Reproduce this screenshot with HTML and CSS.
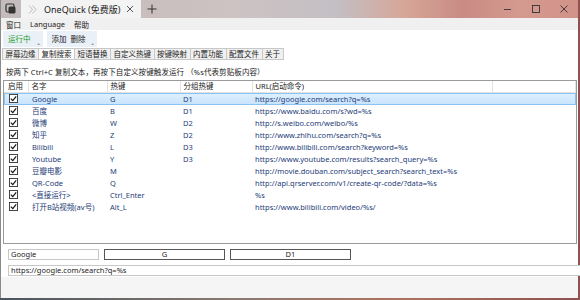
FILE: index.html
```html
<!DOCTYPE html>
<html lang="zh-CN">
<head>
    <meta charset="UTF-8">
    <title>OneQuick (免费版)</title>
    <link rel="stylesheet" href="styles.css">
</head>
<body>
    <div class="window">
        <!-- Barra de titulo -->
        <div class="titlebar">
            <div class="app-icon">
                <svg width="12" height="12" viewBox="0 0 12 12">
                    <rect x="1" y="1" width="8" height="8" rx="1.5" fill="none" stroke="#333" stroke-width="1.2"/>
                    <rect x="3.5" y="3.5" width="7" height="7" rx="1.5" fill="#333"/>
                </svg>
            </div>
            <div class="tab-title">
                <svg class="chev" width="10" height="9" viewBox="0 0 10 9">
                    <path d="M1 0.5 L4.5 4.5 L1 8.5 M4.5 0.5 L8 4.5 L4.5 8.5" fill="none" stroke="#bbb" stroke-width="1"/>
                </svg>
                <span class="title-text">OneQuick (免费版)</span>
                <svg class="tab-close" width="8" height="8" viewBox="0 0 8 8">
                    <path d="M1 1 L7 7 M7 1 L1 7" stroke="#444" stroke-width="0.9"/>
                </svg>
            </div>
            <div class="newtab">
                <svg width="10" height="10" viewBox="0 0 10 10">
                    <path d="M5 0.5 V9.5 M0.5 5 H9.5" stroke="#333" stroke-width="1"/>
                </svg>
            </div>
            <div class="spacer"></div>
            <div class="controls">
                <span class="ctl">
                    <svg width="10" height="10" viewBox="0 0 10 10"><path d="M1 5.5 H8" stroke="#333" stroke-width="0.9"/></svg>
                </span>
                <span class="ctl">
                    <svg width="10" height="10" viewBox="0 0 10 10"><rect x="1.5" y="1.5" width="7" height="7" fill="none" stroke="#333" stroke-width="0.9"/></svg>
                </span>
                <span class="ctl">
                    <svg width="10" height="10" viewBox="0 0 10 10"><path d="M1.5 1.5 L8.5 8.5 M8.5 1.5 L1.5 8.5" stroke="#333" stroke-width="0.9"/></svg>
                </span>
            </div>
        </div>

        <div class="menubar">
            <span>窗口</span>
            <span>Language</span>
            <span>帮助</span>
        </div>

        <div class="content">
            <div class="toolbar">
                <div class="tool-btn running">运行中<span class="drop">⌄</span></div>
                <div class="tool-btn">添加&nbsp;&nbsp;删除<span class="drop">⌄</span></div>
            </div>

            <div class="tabs">
                <span class="tab">屏幕边缘</span>
                <span class="tab active">复制搜索</span>
                <span class="tab">短语替换</span>
                <span class="tab">自定义热键</span>
                <span class="tab">按键映射</span>
                <span class="tab">内置功能</span>
                <span class="tab">配置文件</span>
                <span class="tab">关于</span>
            </div>

            <p class="hint">按两下 Ctrl+C 复制文本，再按下自定义按键触发运行 （%s代表剪贴板内容）</p>

            <div class="list">
                <table>
                    <colgroup>
                        <col class="c-on">
                        <col class="c-name">
                        <col class="c-key">
                        <col class="c-group">
                        <col class="c-url">
                        <col>
                    </colgroup>
                    <thead>
                        <tr>
                            <th>启用</th>
                            <th>名字</th>
                            <th>热键</th>
                            <th>分组热键</th>
                            <th>URL(启动命令)</th>
                            <th></th>
                        </tr>
                    </thead>
                    <tbody>
                        <tr class="selected">
                            <td><svg class="check" viewBox="0 0 10 10"><rect x="0.5" y="0.5" width="9" height="9" fill="#fff" stroke="#333"/><path d="M2 5.2 L4.2 7.3 L8 2.6" fill="none" stroke="#111" stroke-width="1.3"/></svg></td>
                            <td>Google</td><td>G</td><td>D1</td><td>https://google.com/search?q=%s</td><td></td>
                        </tr>
                        <tr>
                            <td><svg class="check" viewBox="0 0 10 10"><rect x="0.5" y="0.5" width="9" height="9" fill="#fff" stroke="#333"/><path d="M2 5.2 L4.2 7.3 L8 2.6" fill="none" stroke="#111" stroke-width="1.3"/></svg></td>
                            <td>百度</td><td>B</td><td>D1</td><td>https://www.baidu.com/s?wd=%s</td><td></td>
                        </tr>
                        <tr>
                            <td><svg class="check" viewBox="0 0 10 10"><rect x="0.5" y="0.5" width="9" height="9" fill="#fff" stroke="#333"/><path d="M2 5.2 L4.2 7.3 L8 2.6" fill="none" stroke="#111" stroke-width="1.3"/></svg></td>
                            <td>微博</td><td>W</td><td>D2</td><td>http://s.weibo.com/weibo/%s</td><td></td>
                        </tr>
                        <tr>
                            <td><svg class="check" viewBox="0 0 10 10"><rect x="0.5" y="0.5" width="9" height="9" fill="#fff" stroke="#333"/><path d="M2 5.2 L4.2 7.3 L8 2.6" fill="none" stroke="#111" stroke-width="1.3"/></svg></td>
                            <td>知乎</td><td>Z</td><td>D2</td><td>http://www.zhihu.com/search?q=%s</td><td></td>
                        </tr>
                        <tr>
                            <td><svg class="check" viewBox="0 0 10 10"><rect x="0.5" y="0.5" width="9" height="9" fill="#fff" stroke="#333"/><path d="M2 5.2 L4.2 7.3 L8 2.6" fill="none" stroke="#111" stroke-width="1.3"/></svg></td>
                            <td>Bilibili</td><td>L</td><td>D3</td><td>http://www.bilibili.com/search?keyword=%s</td><td></td>
                        </tr>
                        <tr>
                            <td><svg class="check" viewBox="0 0 10 10"><rect x="0.5" y="0.5" width="9" height="9" fill="#fff" stroke="#333"/><path d="M2 5.2 L4.2 7.3 L8 2.6" fill="none" stroke="#111" stroke-width="1.3"/></svg></td>
                            <td>Youtube</td><td>Y</td><td>D3</td><td>https://www.youtube.com/results?search_query=%s</td><td></td>
                        </tr>
                        <tr>
                            <td><svg class="check" viewBox="0 0 10 10"><rect x="0.5" y="0.5" width="9" height="9" fill="#fff" stroke="#333"/><path d="M2 5.2 L4.2 7.3 L8 2.6" fill="none" stroke="#111" stroke-width="1.3"/></svg></td>
                            <td>豆瓣电影</td><td>M</td><td></td><td>http://movie.douban.com/subject_search?search_text=%s</td><td></td>
                        </tr>
                        <tr>
                            <td><svg class="check" viewBox="0 0 10 10"><rect x="0.5" y="0.5" width="9" height="9" fill="#fff" stroke="#333"/><path d="M2 5.2 L4.2 7.3 L8 2.6" fill="none" stroke="#111" stroke-width="1.3"/></svg></td>
                            <td>QR-Code</td><td>Q</td><td></td><td>http://api.qrserver.com/v1/create-qr-code/?data=%s</td><td></td>
                        </tr>
                        <tr>
                            <td><svg class="check" viewBox="0 0 10 10"><rect x="0.5" y="0.5" width="9" height="9" fill="#fff" stroke="#333"/><path d="M2 5.2 L4.2 7.3 L8 2.6" fill="none" stroke="#111" stroke-width="1.3"/></svg></td>
                            <td>&lt;直接运行&gt;</td><td>Ctrl_Enter</td><td></td><td>%s</td><td></td>
                        </tr>
                        <tr>
                            <td><svg class="check" viewBox="0 0 10 10"><rect x="0.5" y="0.5" width="9" height="9" fill="#fff" stroke="#333"/><path d="M2 5.2 L4.2 7.3 L8 2.6" fill="none" stroke="#111" stroke-width="1.3"/></svg></td>
                            <td>打开B站视频(av号)</td><td>Alt_L</td><td></td><td>https://www.bilibili.com/video/%s/</td><td></td>
                        </tr>
                    </tbody>
                </table>
            </div>

            <div class="editor">
                <div class="field name-field">Google</div>
                <div class="key-btn">G</div>
                <div class="key-btn">D1</div>
            </div>
            <div class="field url-field">https://google.com/search?q=%s</div>
        </div>

        <div class="statusbar"></div>
    </div>
</body>
</html>
```

FILE: styles.css
```css
body {
    margin: 0;
    width: 580px;
    height: 300px;
    overflow: hidden;
    font-family: 'Noto Sans', 'Noto Sans CJK SC', sans-serif;
    font-size: 7.5px;
    color: #222;
    background: linear-gradient(90deg, #4a5560, #8a7a70 40%, #b07060 70%, #905050);
}
.window {
    width: 578px;
    height: 298px;
    display: flex;
    flex-direction: column;
    background-color: #fff;
    border-left: 1px solid #8a8a8a;
    box-sizing: border-box;
}

/* Barra de titulo */
.titlebar {
    height: 18px;
    display: flex;
    align-items: stretch;
    background: linear-gradient(90deg, #c3b6b5, #cdc3c3 40%, #c3bfc4 58%, #d6a698 70%, #c98b84 80%, #d49a8f 90%, #d19289);
}
.app-icon {
    width: 20px;
    display: flex;
    align-items: center;
    justify-content: center;
    background-color: #c4bcbc;
}
.tab-title {
    width: 120px;
    display: flex;
    align-items: center;
    background-color: #f3f3f3;
    padding-left: 7px;
    box-sizing: border-box;
}
.tab-title .chev {
    margin-right: 6px;
}
.title-text {
    font-size: 9px;
    color: #222;
    flex: 1;
}
.tab-close {
    margin-right: 7px;
}
.newtab {
    width: 22px;
    display: flex;
    align-items: center;
    justify-content: center;
}
.spacer {
    flex: 1;
}
.controls {
    display: flex;
}
.controls .ctl {
    width: 28px;
    display: flex;
    align-items: center;
    justify-content: center;
}

/* Menu */
.menubar {
    height: 12px;
    background-color: #f0f0f0;
    display: flex;
    align-items: center;
    gap: 9px;
    padding-left: 5px;
    color: #222;
}

.content {
    flex: 1;
    display: flex;
    flex-direction: column;
    padding: 1px 0 0 1px;
}
.toolbar {
    display: flex;
    gap: 4px;
    height: 16px;
    margin-left: 1px;
}
.tool-btn {
    position: relative;
    background-color: #e9f0f8;
    padding: 0 12px 0 5px;
    line-height: 16px;
    color: #222;
}
.tool-btn.running {
    color: #1a9a1a;
}
.tool-btn .drop {
    position: absolute;
    right: 2px;
    bottom: 1px;
    font-size: 6px;
    line-height: 6px;
    color: #555;
}

/* Abas */
.tabs {
    display: flex;
    margin-top: 1px;
    height: 12px;
}
.tab {
    border: 1px solid #c8c8c8;
    border-right: none;
    background-color: #f0f0f0;
    padding: 0 2.5px;
    line-height: 10px;
    color: #222;
}
.tab:last-child {
    border-right: 1px solid #c8c8c8;
}
.tab.active {
    background-color: #fff;
}

.hint {
    margin: 6px 0 2px 4px;
    line-height: 12px;
    letter-spacing: 0.1px;
    color: #222;
}

/* Lista */
.list {
    border: 1px solid #9a9a9a;
    margin-left: 1px;
    width: 574px;
    height: 164px;
    box-sizing: border-box;
    overflow: hidden;
}
.list table {
    width: 100%;
    border-collapse: collapse;
    table-layout: fixed;
}
.c-on { width: 24px; }
.c-name { width: 79px; }
.c-key { width: 73px; }
.c-group { width: 72px; }
.c-url { width: 240px; }
.list th {
    font-weight: normal;
    text-align: left;
    height: 11px;
    line-height: 11px;
    padding: 0 0 0 3px;
    border-right: 1px solid #e3e3e3;
    border-bottom: 1px solid #e3e3e3;
    color: #222;
    white-space: nowrap;
}
.list th:first-child {
    padding-left: 4px;
}
.list td {
    height: 12px;
    line-height: 12px;
    padding: 0 0 0 3px;
    color: #1e3b78;
    white-space: nowrap;
}
.list td:nth-child(2) {
    padding-left: 4px;
}
.list td:first-child {
    padding-left: 5px;
}
.list tr.selected td {
    background: linear-gradient(#def0fe, #c6e2fc);
    box-shadow: inset 0 1px #8cc2f0, inset 0 -1px #8cc2f0;
}
.list tr.selected td:first-child {
    box-shadow: inset 0 1px #8cc2f0, inset 0 -1px #8cc2f0, inset 1px 0 #8cc2f0;
}
.list tr.selected td:last-child {
    box-shadow: inset 0 1px #8cc2f0, inset 0 -1px #8cc2f0, inset -1px 0 #8cc2f0;
}
.check {
    display: inline-block;
    width: 9px;
    height: 9px;
    vertical-align: middle;
    margin-top: -2px;
}

/* Editor */
.editor {
    display: flex;
    gap: 5px;
    margin: 5px 0 0 6px;
    height: 11px;
}
.field {
    border: 1px solid #c8c8c8;
    padding-left: 2px;
    line-height: 9px;
    box-sizing: border-box;
    color: #222;
    background-color: #fff;
}
.name-field {
    width: 91px;
}
.key-btn {
    width: 121px;
    border: 1px solid #555;
    box-sizing: border-box;
    text-align: center;
    line-height: 9px;
    color: #222;
}
.url-field {
    margin: 5px -4px 0 6px;
    height: 11px;
}

.statusbar {
    height: 21px;
    background-color: #f5f5f5;
}
```
